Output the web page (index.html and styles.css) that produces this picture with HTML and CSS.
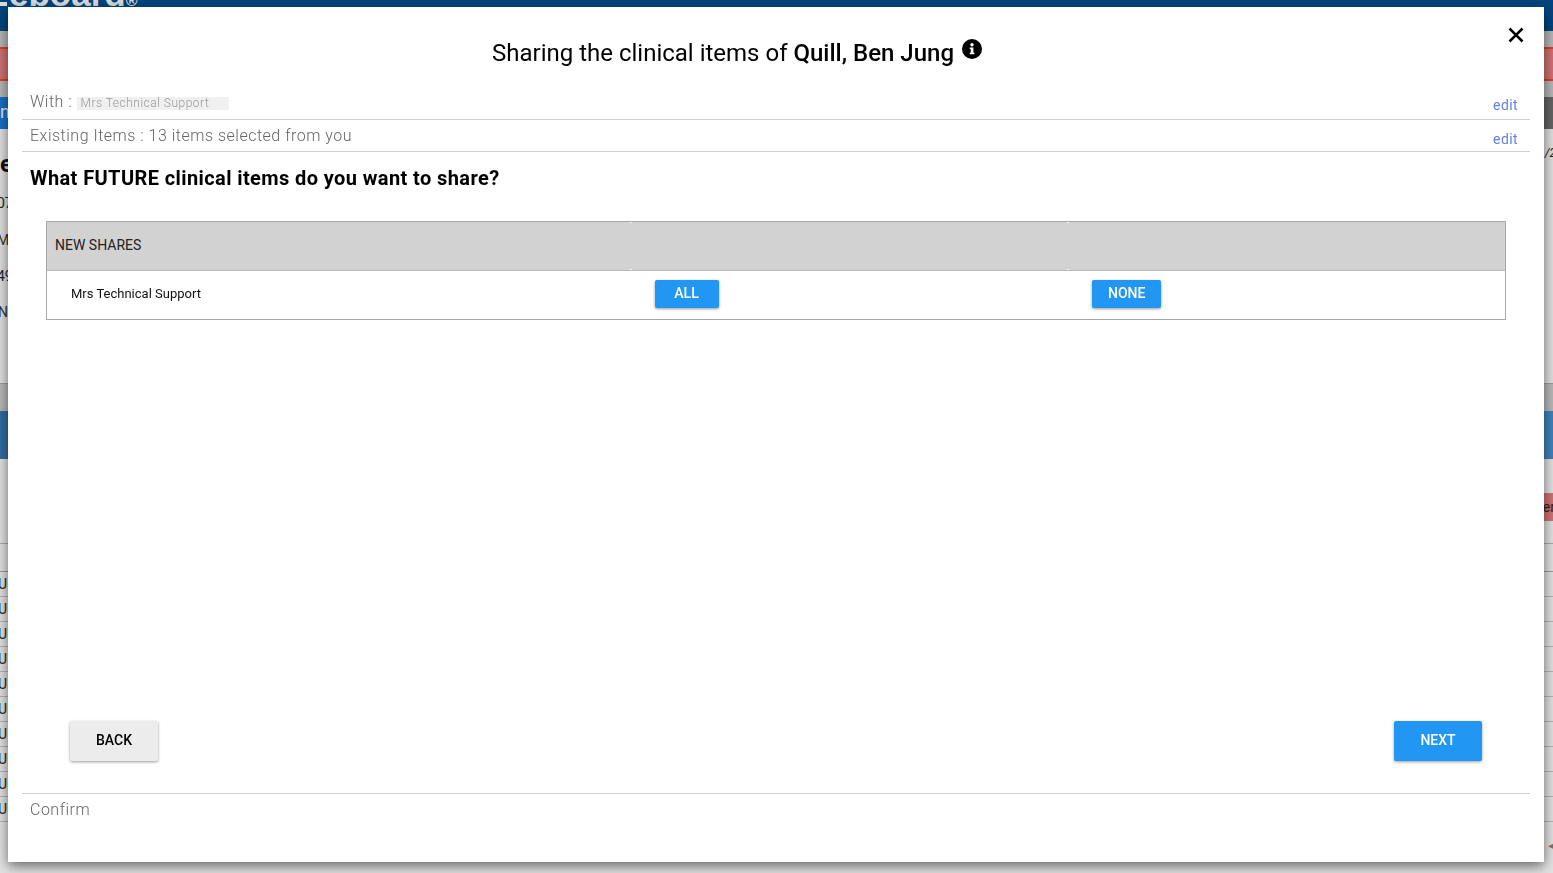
FILE: index.html
```html
<!DOCTYPE html>
<html lang="en">
<head>
<meta charset="utf-8">
<title>Sharing clinical items</title>
<link rel="stylesheet" href="styles.css">
</head>
<body>
<div class="page">
  <header class="top-bar"><span class="logo">eboard<span class="logo-mark">®</span></span></header>
  <div class="band band-grey-a"></div>
  <div class="band band-alert"></div>
  <div class="band band-grey-b"></div>
  <div class="band band-tabs"><span class="tab-left">n</span><span class="tab-right"></span></div>
  <div class="summary">
    <div class="summary-left">
      <span class="sum-title">e</span>
      <span class="sum-a">07</span>
      <span class="sum-b">M</span>
      <span class="sum-c">49</span>
      <span class="sum-d">N</span>
    </div>
    <span class="sum-date">/2</span>
  </div>
  <div class="band band-grey-c"></div>
  <div class="band band-blue"><span class="blue-left"></span><span class="blue-right"></span></div>
  <div class="gap-a"></div>
  <div class="alert-row"><span class="alert-chip">er</span></div>
  <div class="gap-b"></div>
  <ul class="rows">
    <li class="row row-head"></li>
    <li class="row">U</li><li class="row">U</li><li class="row">U</li><li class="row">U</li><li class="row">U</li>
    <li class="row">U</li><li class="row">U</li><li class="row">U</li><li class="row">U</li><li class="row">U</li>
  </ul>
  <span class="scroll-mark">◂</span>
</div>

<section class="modal">
  <svg class="close" viewBox="0 0 16 16" aria-label="close"><path d="M1.5 1.5 14.5 14.5M14.5 1.5 1.5 14.5"/></svg>
  <h1 class="title">Sharing the clinical items of <b>Quill, Ben Jung</b><svg class="info" viewBox="0 0 20 20"><circle class="info-disc" cx="10" cy="10" r="10"/><path class="info-mark" d="M7.7 8.4H11.4V13.7H12.4V15.2H7.7V13.7H8.7V9.9H7.7Z"/><circle class="info-mark" cx="10" cy="5.7" r="1.7"/></svg></h1>
  <div class="step step-with">
    <span class="step-text">With : <span class="chip">Mrs Technical Support</span></span>
    <a class="edit">edit</a>
  </div>
  <div class="step step-existing">
    <span class="step-text">Existing Items : 13 items selected from you</span>
    <a class="edit">edit</a>
  </div>
  <div class="body">
    <h2 class="question">What FUTURE clinical items do you want to share?</h2>
    <table class="shares">
      <thead>
        <tr><th>NEW SHARES</th><th class="tick"></th><th class="tick"></th></tr>
      </thead>
      <tbody>
        <tr>
          <td class="name">Mrs Technical Support</td>
          <td><button class="btn btn-small btn-primary">ALL</button></td>
          <td><button class="btn btn-small btn-primary">NONE</button></td>
        </tr>
      </tbody>
    </table>
    <div class="nav">
      <button class="btn btn-large btn-plain">BACK</button>
      <button class="btn btn-large btn-primary">NEXT</button>
    </div>
  </div>
  <div class="step step-confirm"><span class="step-text">Confirm</span></div>
</section>
</body>
</html>
```
FILE: styles.css
```css
* { box-sizing: border-box; }
html, body { margin: 0; height: 100%; overflow: hidden; }
body { font-family: Roboto, "Liberation Sans", sans-serif; background: #fff; color: #000; }

/* Page behind the dialog */
.page { display: flex; flex-direction: column; height: 873px; position: relative; color: #222; }
.top-bar { height: 31px; background: #00457f; overflow: hidden; flex: none; }
.logo { display: block; margin-top: -22px; font: 700 35px/32px "Liberation Sans", sans-serif; color: #dcdcdc; }
.logo::before { content: ""; display: inline-block; width: 7px; height: 4px; margin-right: 2px; background: #dcdcdc; }
.logo-mark { font-size: 16px; }
.band { flex: none; }
.band-grey-a { height: 16px; background: #b6b6b6; }
.band-alert { height: 34px; background: #cf7272; border-top: 2px solid #dc3c36; border-bottom: 2px solid #dc3c36; }
.band-grey-b { height: 16px; background: #b6b6b6; }
.band-tabs { height: 32px; display: flex; justify-content: space-between; }
.tab-left { width: 60px; background: #1770c4; color: #e8e8e8; font-size: 18px; line-height: 30px; overflow: hidden; }
.tab-right { flex: 1; background: #646464; }
.summary { height: 255px; background: #e0e0e0; border-bottom: 1px solid #9c9c9c; display: flex; justify-content: space-between; flex: none; }
.summary-left { display: flex; flex-direction: column; font-size: 14px; }
.sum-title { font-size: 24px; font-weight: 700; color: #111; margin-top: 21px; line-height: 28px; }
.sum-a { margin-top: 15px; line-height: 20px; margin-left: -3px; }
.sum-b { margin-top: 17px; line-height: 20px; margin-left: -3px; color: #333; }
.sum-c { margin-top: 16px; line-height: 20px; margin-left: -3px; }
.sum-d { margin-top: 16px; line-height: 20px; margin-left: -2px; color: #333; }
.sum-date { font-size: 12px; font-style: italic; margin-top: 17px; margin-right: -3px; line-height: 14px; }
.band-grey-c { height: 27px; background: #b8b8b8; }
.band-blue { height: 48px; display: flex; }
.blue-left { flex: 1; background: #2f6da3; }
.blue-right { flex: 1; background: #3f82bb; }
.gap-a { height: 34px; background: #e2e2e2; flex: none; }
.alert-row { height: 28px; background: #e2e2e2; display: flex; justify-content: flex-end; flex: none; }
.alert-chip { width: 60px; background: #cf7272; font-size: 14px; line-height: 28px; text-align: right; overflow: hidden; margin-right: -2px; }
.gap-b { height: 23px; background: #e2e2e2; border-bottom: 1px solid #a8a8a8; flex: none; }
.rows { list-style: none; margin: 0; padding: 0; flex: 1; background: #e2e2e2; }
.row { height: 25px; border-bottom: 1px solid #b4b4b4; font-size: 14px; line-height: 24px; text-indent: -2px; color: #222; }
.row-head { height: 28px; border-bottom: 1px solid #999; }
.scroll-mark { position: absolute; right: -2px; top: 838px; font-size: 14px; line-height: 14px; color: #777; }

/* Dialog */
.modal {
  position: fixed; left: 8px; top: 7px; width: 1536px; height: 855px;
  background: #fff; padding: 0 14px;
  display: flex; flex-direction: column;
  box-shadow: 0 4px 12px rgba(0, 0, 0, 0.55);
}
.close { position: absolute; top: 20px; right: 20px; width: 16px; height: 16px; fill: none; stroke: #000; stroke-width: 2.6; }
.title { margin: 0; height: 81px; padding: 30px 78px 0 0; font-size: 24px; font-weight: 400; line-height: 32px; text-align: center; }
.title b { font-weight: 500; }
.info { width: 20px; height: 20px; margin-left: 8px; vertical-align: 2px; }
.info-disc { fill: #000; }
.info-mark { fill: #fff; }
.step { display: flex; justify-content: space-between; padding: 0 12px 0 8px; border-bottom: 1px solid #d0d0d0; color: #666; font-weight: 300; letter-spacing: 0.5px; font-size: 16px; flex: none; }
.step-with { height: 32px; line-height: 28px; }
.step-existing { height: 32px; line-height: 32px; }
.step-confirm { border-bottom: 0; border-top: 1px solid #d0d0d0; height: 69px; line-height: 32px; }
.chip { display: inline-block; width: 152px; height: 13px; padding-left: 4px; background: #f0f0f0; color: #999; font-size: 12px; line-height: 13px; vertical-align: 0; }
.edit { color: #6480e6; font-size: 14px; font-weight: 400; letter-spacing: 0.4px; align-self: flex-end; line-height: 20px; margin-bottom: 4px; }
.step-existing .edit { margin-bottom: 2px; }
.body { flex: 1; display: flex; flex-direction: column; padding: 0 24px 0 8px; }
.question { margin: 13px 0 0; font-size: 20px; font-weight: 700; line-height: 26px; letter-spacing: 0.4px; flex: none; }
.shares { width: 1460px; margin: 30px 0 0 16px; border-collapse: collapse; table-layout: fixed; border: 1px solid #a8a8a8; flex: none; }
.shares th { height: 49px; background: #d2d2d2; font-weight: 400; font-size: 14px; text-align: left; padding: 0 8px 2px; border-bottom: 1px solid #b8b8b8; color: #222; position: relative; }
.shares th:first-child { width: 584px; }
.shares td { height: 49px; padding: 9px 24px 0; vertical-align: top; font-size: 13px; color: #111; }
.shares td.name { line-height: 28px; }
.tick::before, .tick::after { content: ""; position: absolute; left: -1px; width: 2px; height: 1px; background: #f4f4f4; }
.tick::before { top: 0; }
.tick::after { bottom: 0; }
.btn { border: 0; border-radius: 2px; font-family: inherit; font-weight: 500; text-transform: uppercase; display: block; padding-bottom: 3px; box-shadow: 0 1px 3px rgba(0, 0, 0, 0.4); }
.btn-small { height: 28px; min-width: 64px; padding-left: 16px; padding-right: 16px; font-size: 14px; }
.btn-large { height: 40px; width: 88px; font-size: 14px; }
.btn-primary { background: #2196f3; color: #fff; }
.btn-plain { background: #ececec; color: #000; }
.nav { margin-top: auto; margin-bottom: 32px; padding: 0 24px 0 40px; display: flex; justify-content: space-between; }
```
